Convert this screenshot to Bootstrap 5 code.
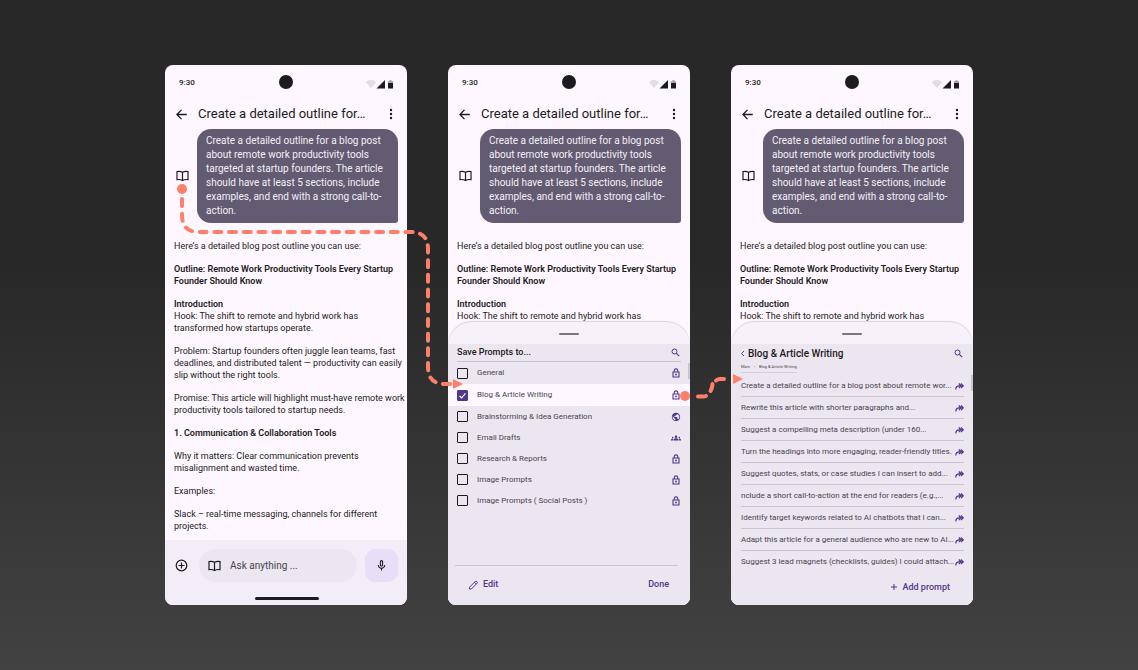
<!DOCTYPE html>
<html lang="en">
<head>
<meta charset="utf-8">
<meta name="viewport" content="width=device-width, initial-scale=1">
<title>Save prompts flow</title>
<link rel="stylesheet" href="https://cdn.jsdelivr.net/npm/bootstrap@5.3.0/dist/css/bootstrap.min.css">
<style>
  :root { --ink: #1d1b20; --violet: #4f378a; --surface: #fef7ff; --sheet: #ece6f0; }
  body { font-family: Roboto, "Liberation Sans", sans-serif; color: var(--ink); line-height: 1.5;
         background: linear-gradient(#282828 0%, #282828 40%, #424242 100%) no-repeat #424242; }
  svg { display: block; flex: none; }
  button { border: 0; background: none; padding: 0; color: inherit; flex: none; }
  .flow { max-width: 808px; gap: 41px; }
  .phone { flex: 1 1 0; min-width: 0; background: var(--surface); border-radius: 8px; overflow: hidden; }
  .status { height: 36px; padding: 0 14px; font-size: 8px; font-weight: 500; display: grid; grid-template-columns: 1fr auto 1fr; align-items: center; }
  .status svg { margin-top: 2px; }
  .camera { width: 14px; height: 14px; background: var(--ink); margin-top: -2px; }
  .appbar { height: 26px; padding: 0 12px 0 11px; }
  .appbar h2 { font-size: 13px; font-weight: 400; margin: 0 0 0 11px; }
  .ask { padding: 2px 9px 0 11px; gap: 8px; }
  .bubble { background: #625b71; color: #f4eff7; border-radius: 14px 14px 3px 14px; padding: 5px 9px; font-size: 10px; line-height: 14px; margin: 0; }
  .reply { padding: 17px 9px 0; font-size: 9px; line-height: 12px; }
  .reply p { margin: 0 0 11px; }
  .reply p:last-child { margin: 0; }
  .reply strong { font-weight: 600; }
  .composer { background: #f3edf7; margin-top: 8px; padding: 9px 9px 5px 10px; }
  .field { background: #ebe6ef; border-radius: 17px; height: 33px; margin-left: 11px; padding-left: 9px; gap: 9px; min-width: 0; }
  .field input { border: 0; background: none; outline: 0; width: 0; font-size: 10px; padding: 0; color: #49454f; }
  .field input::placeholder { color: #49454f; opacity: 1; }
  .mic { width: 33px; height: 33px; border-radius: 10px; background: #e8def8; margin-left: 8px; }
  .homebar { width: 64px; height: 3px; border-radius: 2px; background: var(--ink); margin: 15px auto 0; }
  .sheet { background: #f7f2fa; border-radius: 24px 24px 0 0; box-shadow: 0 -1px 1px #d9d3dd; }
  .grip { height: 22px; padding-top: 11px; }
  .grip span { width: 20px; height: 2px; background: #79747e; border-radius: 1px; }
  .sheet-body { background: var(--sheet); color: #49454f; }
  .violet { color: var(--violet); }
  .head { height: 18px; margin: 0 9px; border-bottom: 1px solid #cac4d0; padding-right: 1px; }
  .sheet h3 { font-size: 9px; font-weight: 500; color: var(--ink); margin: 0; }
  .list { position: relative; }
  .thumb { position: absolute; right: 0; width: 2px; height: 16px; background: #cac4d0; top: 1px; }
  .thumb.lower { top: 31px; }
  .folder { height: 21px; padding: 0 9px; font-size: 8px; }
  .folder label { color: #49454f; }
  .folder:nth-of-type(1) { height: 22px; }
  .folder.on { background: var(--surface); height: 22px; }
  .folder input { appearance: none; width: 11px; height: 11px; margin: 0 9px 0 0; border: 1px solid var(--ink); border-radius: 1px; flex: none; }
  .folder input:checked { border-color: var(--violet); background: var(--violet) url("data:image/svg+xml,%3Csvg xmlns='http://www.w3.org/2000/svg' viewBox='0 0 9 9'%3E%3Cpath d='M1.5 4.8l2 2 4-4.4' fill='none' stroke='white' stroke-width='1.2'/%3E%3C/svg%3E"); }
  .actions { margin: auto 12px 0 7px; border-top: 1px solid #cac4d0; height: 40px; padding: 0 9px 2px 13px; font-size: 9px; }
  .actions button, .add { font-weight: 500; }
  .head2 { padding: 0 10px 0 9px; height: 19px; }
  .sheet .head2 h3 { font-size: 10px; margin-left: 3px; }
  .crumbs { font-size: 4px; line-height: 8px; height: 10px; margin-left: 10px; border-bottom: 1px solid #d6cfdb; color: #49454f; }
  .prompts { margin: 2px 9px 0 10px; }
  .prompts li { height: 22px; font-size: 8px; border-bottom: 1px solid #cac4d0; }
  .prompts li:last-child { border: 0; }
  .add { margin: auto 23px 11px auto; font-size: 9px; gap: 6px; }
  .links { position: absolute; inset: 0; width: 100%; pointer-events: none; }
  @media (max-width: 767px) { .flow { flex-direction: column; max-width: 260px; } .phone { flex: none; } .links { display: none; } }
</style>
</head>
<body>
<svg width="0" height="0" class="position-absolute" aria-hidden="true">
  <symbol id="radios" viewBox="0 0 27 11">
    <path d="M0 3.4C3-.1 7-.1 10 3.4L5 9z" fill="#e2dce5"/><path d="M19 1v8.500h-8.500z" fill="#1d1b20"/>
    <path d="M22 4V2h1.500V1h2v1H27v2z" fill="#a9a4ad"/><path d="M22 4h5v5.500h-5z" fill="#1d1b20"/>
  </symbol>
  <symbol id="back" viewBox="0 0 10 10"><path d="M9.800 5H1M5 .8L.8 5 5 9.200" fill="none" stroke="currentColor" stroke-width="1.200"/></symbol>
  <symbol id="dots" viewBox="0 0 4 12"><g fill="currentColor"><circle cx="2" cy="2" r="1.200"/><circle cx="2" cy="6" r="1.200"/><circle cx="2" cy="10" r="1.200"/></g></symbol>
  <symbol id="book" viewBox="0 0 13 12"><path d="M6.500 2.300C5 1.500 3 1.300 1 1.600v8c2-.3 4 0 5.500.9 1.500-.9 3.500-1.200 5.500-.9v-8c-2-.3-4-.1-5.500.7zv8.200" fill="none" stroke="currentColor" stroke-width="1.200"/></symbol>
  <symbol id="lock" viewBox="0 0 8 10"><path d="M1 4h6v5H1zM2.300 4V2.600a1.700 1.700 0 0 1 3.400 0V4" fill="none" stroke="currentColor" stroke-width="1.100"/><circle cx="4" cy="6.500" r=".9" fill="currentColor"/></symbol>
  <symbol id="globe" viewBox="0 0 24 24"><path fill="currentColor" d="M12 2C6.480 2 2 6.480 2 12s4.480 10 10 10 10-4.480 10-10S17.520 2 12 2zm-1 17.930c-3.950-.49-7-3.850-7-7.930 0-.62.080-1.210.210-1.790L9 15v1c0 1.100.9 2 2 2v1.930zm6.900-2.540c-.26-.81-1-1.390-1.900-1.390h-1v-3c0-.55-.45-1-1-1H8v-2h2c.55 0 1-.45 1-1V7h2c1.100 0 2-.9 2-2v-.41c2.930 1.190 5 4.060 5 7.410 0 2.080-.8 3.970-2.100 5.390z"/></symbol>
  <symbol id="group" viewBox="0 0 24 24"><path fill="currentColor" d="M12 12.750c1.630 0 3.070.39 4.240.9 1.080.48 1.760 1.560 1.760 2.730V18H6v-1.610c0-1.180.68-2.260 1.760-2.730 1.170-.52 2.610-.91 4.240-.91zM4 13c1.100 0 2-.9 2-2s-.9-2-2-2-2 .9-2 2 .9 2 2 2zm1.130 1.100C4.760 14.040 4.390 14 4 14c-.99 0-1.930.21-2.780.58C.48 14.900 0 15.620 0 16.430V18h4.500v-1.610c0-.83.23-1.610.63-2.290zM20 13c1.100 0 2-.9 2-2s-.9-2-2-2-2 .9-2 2 .9 2 2 2zm4 3.430c0-.81-.48-1.530-1.220-1.850-.85-.37-1.790-.58-2.780-.58-.39 0-.76.040-1.130.1.400.68.630 1.460.630 2.290V18H24v-1.570zM12 6c1.660 0 3 1.340 3 3s-1.340 3-3 3-3-1.340-3-3 1.340-3 3-3z"/></symbol>
  <symbol id="search" viewBox="0 0 9 9"><circle cx="3.500" cy="3.500" r="2.500" fill="none" stroke="currentColor"/><path d="M5.400 5.400L8.200 8.200" stroke="currentColor" stroke-width="1.100"/></symbol>
  <symbol id="share" viewBox="0 0 9 8"><path d="M.8 7.500C.8 5 2 3.800 4.300 3.800h3M3.800 1.500l2.300 2.300-2.300 2.300M6 1.500l2.300 2.300L6 6.100" fill="none" stroke="currentColor" stroke-width="1.200"/></symbol>
  <symbol id="mic" viewBox="0 0 24 24"><path fill="currentColor" d="M12 14c1.660 0 3-1.340 3-3V5c0-1.660-1.340-3-3-3S9 3.340 9 5v6c0 1.660 1.340 3 3 3zm-1-9c0-.55.45-1 1-1s1 .45 1 1v6c0 .55-.45 1-1 1s-1-.45-1-1V5zm6 6c0 2.760-2.240 5-5 5s-5-2.240-5-5H5c0 3.530 2.610 6.430 6 6.920V21h2v-3.080c3.390-.49 6-3.390 6-6.920h-2z"/></symbol>
  <symbol id="addround" viewBox="0 0 13 13"><path d="M6.500 3.500v6M3.500 6.500h6" stroke="currentColor" stroke-width="1.200"/><circle cx="6.500" cy="6.500" r="5.300" fill="none" stroke="currentColor" stroke-width="1.200"/></symbol>
  <symbol id="pencil" viewBox="0 0 10 10"><path d="M1 9V7.200L7.300.9l1.800 1.800L2.800 9zM6 2.200L7.800 4" fill="none" stroke="currentColor"/></symbol>
</svg>

<main class="min-vh-100 d-flex align-items-center justify-content-center px-3 py-5">
<div class="flow d-flex align-items-stretch position-relative w-100">

  <section class="phone d-flex flex-column">
    <div class="status"><span>9:30</span><span class="camera rounded-circle"></span><svg width="27" height="11" class="ms-auto"><use href="#radios"/></svg></div>
    <header class="appbar d-flex align-items-center"><button aria-label="Back"><svg width="11" height="11"><use href="#back"/></svg></button><h2>Create a detailed outline for…</h2><button class="ms-auto" aria-label="More"><svg width="8" height="12"><use href="#dots"/></svg></button></header>
    <div class="ask d-flex align-items-center"><button aria-label="Save prompt"><svg width="13" height="12"><use href="#book"/></svg></button>
      <p class="bubble flex-fill text-nowrap">Create a detailed outline for a blog post<br>about remote work productivity tools<br>targeted at startup founders. The article<br>should have at least 5 sections, include<br>examples, and end with a strong call-to-<br>action.</p></div>
    <div class="reply text-nowrap">
      <p>Here’s a detailed blog post outline you can use:</p>
      <p><strong>Outline: Remote Work Productivity Tools Every Startup<br>Founder Should Know</strong></p>
      <p><strong>Introduction</strong><br>Hook: The shift to remote and hybrid work has<br>transformed how startups operate.</p>
      <p>Problem: Startup founders often juggle lean teams, fast<br>deadlines, and distributed talent — productivity can easily<br>slip without the right tools.</p>
      <p>Promise: This article will highlight must-have remote work<br>productivity tools tailored to startup needs.</p>
      <p><strong>1. Communication &amp; Collaboration Tools</strong></p>
      <p>Why it matters: Clear communication prevents<br>misalignment and wasted time.</p>
      <p>Examples:</p>
      <p>Slack – real-time messaging, channels for different<br>projects.</p>
    </div>
    <footer class="composer">
      <div class="d-flex align-items-center">
        <button aria-label="Add"><svg width="13" height="13"><use href="#addround"/></svg></button>
        <label class="field d-flex align-items-center flex-fill"><svg width="13" height="12"><use href="#book"/></svg><input class="flex-fill" type="text" placeholder="Ask anything ..." aria-label="Ask anything"></label>
        <button class="mic d-flex align-items-center justify-content-center" aria-label="Voice"><svg width="13" height="13"><use href="#mic"/></svg></button>
      </div>
      <div class="homebar"></div>
    </footer>
  </section>

  <section class="phone d-flex flex-column">
    <div class="status"><span>9:30</span><span class="camera rounded-circle"></span><svg width="27" height="11" class="ms-auto"><use href="#radios"/></svg></div>
    <header class="appbar d-flex align-items-center"><button aria-label="Back"><svg width="11" height="11"><use href="#back"/></svg></button><h2>Create a detailed outline for…</h2><button class="ms-auto" aria-label="More"><svg width="8" height="12"><use href="#dots"/></svg></button></header>
    <div class="ask d-flex align-items-center"><button aria-label="Save prompt"><svg width="13" height="12"><use href="#book"/></svg></button>
      <p class="bubble flex-fill text-nowrap">Create a detailed outline for a blog post<br>about remote work productivity tools<br>targeted at startup founders. The article<br>should have at least 5 sections, include<br>examples, and end with a strong call-to-<br>action.</p></div>
    <div class="reply text-nowrap">
      <p>Here’s a detailed blog post outline you can use:</p>
      <p><strong>Outline: Remote Work Productivity Tools Every Startup<br>Founder Should Know</strong></p>
      <p><strong>Introduction</strong><br>Hook: The shift to remote and hybrid work has</p>
    </div>
    <div class="sheet flex-fill d-flex flex-column">
      <div class="grip d-flex justify-content-center"><span></span></div>
      <div class="sheet-body flex-fill d-flex flex-column">
        <div class="head d-flex align-items-center justify-content-between"><h3>Save Prompts to...</h3><button class="violet" aria-label="Search"><svg width="9" height="9"><use href="#search"/></svg></button></div>
        <div class="list violet"><span class="thumb"></span>
          <div class="folder d-flex align-items-center"><input type="checkbox" id="f1"><label for="f1" class="me-auto">General</label><svg width="10" height="10"><use href="#lock"/></svg></div>
          <div class="folder on d-flex align-items-center"><input type="checkbox" id="f2" checked><label for="f2" class="me-auto">Blog &amp; Article Writing</label><svg width="10" height="10"><use href="#lock"/></svg></div>
          <div class="folder d-flex align-items-center"><input type="checkbox" id="f3"><label for="f3" class="me-auto">Brainstorming &amp; Idea Generation</label><svg width="10" height="10"><use href="#globe"/></svg></div>
          <div class="folder d-flex align-items-center"><input type="checkbox" id="f4"><label for="f4" class="me-auto">Email Drafts</label><svg width="10" height="10"><use href="#group"/></svg></div>
          <div class="folder d-flex align-items-center"><input type="checkbox" id="f5"><label for="f5" class="me-auto">Research &amp; Reports</label><svg width="10" height="10"><use href="#lock"/></svg></div>
          <div class="folder d-flex align-items-center"><input type="checkbox" id="f6"><label for="f6" class="me-auto">Image Prompts</label><svg width="10" height="10"><use href="#lock"/></svg></div>
          <div class="folder d-flex align-items-center"><input type="checkbox" id="f7"><label for="f7" class="me-auto">Image Prompts ( Social Posts )</label><svg width="10" height="10"><use href="#lock"/></svg></div>
        </div>
        <div class="actions violet d-flex align-items-center justify-content-between"><button class="d-flex align-items-center gap-1"><svg width="11" height="10"><use href="#pencil"/></svg>Edit</button><button>Done</button></div>
      </div>
    </div>
  </section>

  <section class="phone d-flex flex-column">
    <div class="status"><span>9:30</span><span class="camera rounded-circle"></span><svg width="27" height="11" class="ms-auto"><use href="#radios"/></svg></div>
    <header class="appbar d-flex align-items-center"><button aria-label="Back"><svg width="11" height="11"><use href="#back"/></svg></button><h2>Create a detailed outline for…</h2><button class="ms-auto" aria-label="More"><svg width="8" height="12"><use href="#dots"/></svg></button></header>
    <div class="ask d-flex align-items-center"><button aria-label="Save prompt"><svg width="13" height="12"><use href="#book"/></svg></button>
      <p class="bubble flex-fill text-nowrap">Create a detailed outline for a blog post<br>about remote work productivity tools<br>targeted at startup founders. The article<br>should have at least 5 sections, include<br>examples, and end with a strong call-to-<br>action.</p></div>
    <div class="reply text-nowrap">
      <p>Here’s a detailed blog post outline you can use:</p>
      <p><strong>Outline: Remote Work Productivity Tools Every Startup<br>Founder Should Know</strong></p>
      <p><strong>Introduction</strong><br>Hook: The shift to remote and hybrid work has</p>
    </div>
    <div class="sheet flex-fill d-flex flex-column">
      <div class="grip d-flex justify-content-center"><span></span></div>
      <div class="sheet-body flex-fill d-flex flex-column list"><span class="thumb lower"></span>
        <div class="head2 d-flex align-items-center"><button class="violet" aria-label="Back"><svg width="5" height="7" viewBox="0 0 5 7"><path d="M4 1L1.500 3.500 4 6" fill="none" stroke="currentColor"/></svg></button><h3>Blog &amp; Article Writing</h3><button class="violet ms-auto" aria-label="Search"><svg width="9" height="9"><use href="#search"/></svg></button></div>
        <div class="crumbs align-self-start d-flex"><span>Main</span><span class="px-1">›</span><span>Blog &amp; Article Writing</span></div>
        <ul class="prompts list-unstyled mb-0 text-nowrap">
          <li class="d-flex align-items-center justify-content-between">Create a detailed outline for a blog post about remote wor...<svg class="violet" width="9" height="8"><use href="#share"/></svg></li>
          <li class="d-flex align-items-center justify-content-between">Rewrite this article with shorter paragraphs and...<svg class="violet" width="9" height="8"><use href="#share"/></svg></li>
          <li class="d-flex align-items-center justify-content-between">Suggest a compelling meta description (under 160...<svg class="violet" width="9" height="8"><use href="#share"/></svg></li>
          <li class="d-flex align-items-center justify-content-between">Turn the headings into more engaging, reader-friendly titles.<svg class="violet" width="9" height="8"><use href="#share"/></svg></li>
          <li class="d-flex align-items-center justify-content-between">Suggest quotes, stats, or case studies I can insert to add...<svg class="violet" width="9" height="8"><use href="#share"/></svg></li>
          <li class="d-flex align-items-center justify-content-between">nclude a short call-to-action at the end for readers (e.g.,...<svg class="violet" width="9" height="8"><use href="#share"/></svg></li>
          <li class="d-flex align-items-center justify-content-between">Identify target keywords related to AI chatbots that I can...<svg class="violet" width="9" height="8"><use href="#share"/></svg></li>
          <li class="d-flex align-items-center justify-content-between">Adapt this article for a general audience who are new to AI...<svg class="violet" width="9" height="8"><use href="#share"/></svg></li>
          <li class="d-flex align-items-center justify-content-between">Suggest 3 lead magnets (checklists, guides) I could attach...<svg class="violet" width="9" height="8"><use href="#share"/></svg></li>
        </ul>
        <button class="add violet d-flex align-items-center"><svg width="6" height="6" viewBox="0 0 6 6"><path d="M3 0v6M0 3h6" stroke="currentColor"/></svg>Add prompt</button>
      </div>
    </div>
  </section>

  <svg class="links" viewBox="0 0 808 540" preserveAspectRatio="xMidYMin meet" aria-hidden="true">
    <g fill="none" stroke="#ff7f6b" stroke-width="4" stroke-linecap="round">
      <path d="M17 134V150Q17 167 34 167H246Q263 167 263 184V302Q263 319 280 319H287" stroke-dasharray="7 7.700"/>
      <path d="M533 331.500H538Q540 331.500 541 331M545.500 326Q547 324 547.500 319M551 315.500Q553 314 555 314H559"/>
    </g>
    <g fill="#ff7f6b"><circle cx="17" cy="124" r="5"/><circle cx="520" cy="331" r="5"/><path d="M288 314l10 5-10 5zM568 309l10 5-10 5z"/></g>
  </svg>
</div>
</main>
<script src="https://cdn.jsdelivr.net/npm/bootstrap@5.3.0/dist/js/bootstrap.bundle.min.js"></script>
</body>
</html>
